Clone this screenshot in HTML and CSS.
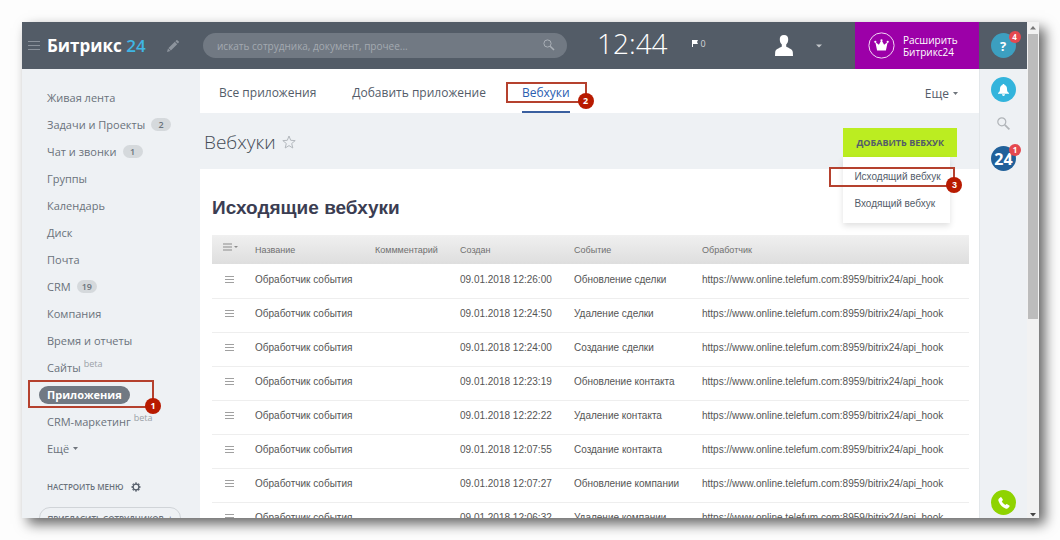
FILE: index.html
```html
<!DOCTYPE html>
<html lang="ru">
<head>
<meta charset="utf-8">
<title>Битрикс 24 – Вебхуки</title>
<link rel="stylesheet" href="styles.css">
</head>
<body>
<div class="frame">
  <div class="app">
    <header class="topbar">
      <button class="icon-btn burger" aria-label="Меню">
        <svg width="12" height="11" viewBox="0 0 12 11"><path d="M0 1.5h12M0 5.5h12M0 9.5h12" stroke="#8b929b" stroke-width="1"/></svg>
      </button>
      <a class="logo" href="#">Битрикс <span class="logo-num">24</span></a>
      <button class="icon-btn edit" aria-label="Изменить">
        <svg width="12" height="12" viewBox="0 0 12 12" fill="#8d949d"><path d="M0 12l1-3.400 2.400 2.400zM1.500 8.100l6.300-6.300 2.400 2.400-6.300 6.300zM8.400 1.200l1-1q.500-.4 1 0l1.400 1.400q.4.500 0 1l-1 1z"/></svg>
      </button>
      <form class="search">
        <input class="search-input" type="text" aria-label="Поиск" placeholder="искать сотрудника, документ, прочее...">
        <svg class="search-icon" width="12" height="12" viewBox="0 0 12 12" fill="none" stroke="#a9afb6"><circle cx="4.500" cy="4.500" r="3.600"/><path d="M7.200 7.200l3.800 3.800" stroke-width="1.600"/></svg>
      </form>
      <time class="clock">12:44</time>
      <span class="flag"><svg width="6" height="7" viewBox="0 0 6 7" fill="#fff"><path d="M0 0h1v7H0zM1 0h5L5 2l1 2H1z"/></svg>0</span>
      <button class="icon-btn user" aria-label="Профиль">
        <svg width="18" height="21" viewBox="0 0 18 21" fill="#fff"><path d="M9 0c3 0 4.400 1.800 4.200 4.600 0 2.200-.8 4-2 5v2c.8 1.200 6.200 2 6.600 5.400L18 21H0l.2-4C.6 13.600 6 12.800 6.800 11.600v-2c-1.200-1-2-2.800-2-5C4.600 1.800 6 0 9 0z"/></svg>
        <svg class="user-caret" width="6" height="4" viewBox="0 0 6 4" fill="#c3c7cb"><path d="M0 .5h6L3 3.500z"/></svg>
      </button>
      <a class="upgrade" href="#">
        <svg width="27" height="27" viewBox="0 0 27 27"><circle cx="13.500" cy="13.500" r="12.600" fill="none" stroke="#f3d7f5"/><path d="M7.300 10l3.600 2.800 2.600-4.800 2.600 4.800 3.600-2.800-1.800 8.400H9.100z" fill="#fff"/><circle cx="7.300" cy="9.800" r="1.100" fill="#fff"/><circle cx="13.500" cy="8.300" r="1.100" fill="#fff"/><circle cx="19.700" cy="9.800" r="1.100" fill="#fff"/></svg>
        <span>Расширить<br>Битрикс24</span>
      </a>
      <div class="help-cell">
        <button class="round help" aria-label="Помощь">?<span class="counter">4</span></button>
      </div>
    </header>

    <nav class="sidebar">
      <ul class="menu">
        <li><a href="#">Живая лента</a></li>
        <li><a href="#">Задачи и Проекты</a><span class="badge">2</span></li>
        <li><a href="#">Чат и звонки</a><span class="badge">1</span></li>
        <li><a href="#">Группы</a></li>
        <li><a href="#">Календарь</a></li>
        <li><a href="#">Диск</a></li>
        <li><a href="#">Почта</a></li>
        <li><a href="#">CRM</a><span class="badge">19</span></li>
        <li><a href="#">Компания</a></li>
        <li><a href="#">Время и отчеты</a></li>
        <li><a href="#">Сайты</a><span class="beta">beta</span></li>
        <li class="marked"><a class="active" href="#">Приложения</a><span class="mark mark-menu"><b class="mark-num">1</b></span></li>
        <li><a href="#">CRM-маркетинг</a><span class="beta">beta</span></li>
      </ul>
      <button class="more">Ещё <svg width="5" height="3" viewBox="0 0 5 3" fill="#6f757c"><path d="M0 0h5L2.500 3z"/></svg></button>
      <button class="configure">Настроить меню
        <svg width="10" height="10" viewBox="0 0 10 10" fill="none" stroke="#535c69"><circle cx="5" cy="5" r="2.900" stroke-width="1.300"/><path d="M5 .6v1.200M5 8.200v1.200M.6 5h1.200M8.200 5h1.200M1.800 1.800l.9.9M7.300 7.300l.9.9M8.200 1.800l-.9.9M2.700 7.300l-.9.9" stroke-width="1.800"/></svg>
      </button>
      <button class="invite">Пригласить сотрудников <span>+</span></button>
    </nav>

    <main class="main">
      <nav class="tabs">
        <a class="tab" href="#">Все приложения</a>
        <a class="tab" href="#">Добавить приложение</a>
        <a class="tab current" href="#">Вебхуки<span class="mark mark-tab"><b class="mark-num">2</b></span></a>
        <button class="tabs-more">Еще <svg width="5" height="3" viewBox="0 0 5 3" fill="#6f757c"><path d="M0 0h5L2.500 3z"/></svg></button>
      </nav>
      <div class="titlebar">
        <h1 class="title">Вебхуки</h1>
        <svg width="14" height="14" viewBox="0 0 14 14" fill="none" stroke="#b3b8bd"><path d="M7 1l1.700 4.300 4.500.3-3.500 2.900 1.100 4.500L7 10.600 3.200 13l1.100-4.500L.8 5.600l4.500-.3z"/></svg>
        <div class="add">
          <button class="add-btn">Добавить вебхук</button>
          <div class="dropdown">
            <a class="drop-item" href="#">Исходящий вебхук<span class="mark mark-drop"><b class="mark-num">3</b></span></a>
            <a class="drop-item" href="#">Входящий вебхук</a>
          </div>
        </div>
      </div>
      <section class="content">
        <h2 class="heading">Исходящие вебхуки</h2>
        <table class="grid">
          <colgroup><col class="c-menu"><col class="c-name"><col class="c-note"><col class="c-date"><col class="c-event"><col></colgroup>
          <thead>
            <tr><th><svg width="15" height="8" viewBox="0 0 15 8"><path d="M0 1h9M0 4h9M0 7h9" stroke="#8b8b8b"/><path d="M11 3h4l-2 2z" fill="#8b8b8b"/></svg></th><th>Название</th><th>Коммментарий</th><th>Создан</th><th>Событие</th><th>Обработчик</th></tr>
          </thead>
          <tbody id="rows"></tbody>
        </table>
      </section>
    </main>

    <aside class="rail">
      <button class="round bell" aria-label="Уведомления">
        <svg width="11" height="12" viewBox="0 0 11 12" fill="#fff"><path d="M5.500 0c.7 0 1 .4 1 1 1.800.5 2.500 2 2.500 3.800 0 2.400.5 3.200 2 4.200v.8H0V9c1.500-1 2-1.800 2-4.200C2 3 2.700 1.500 4.500 1c0-.6.3-1 1-1zM4 10.300h3c0 2.200-3 2.200-3 0z"/></svg>
      </button>
      <button class="icon-btn rail-search" aria-label="Поиск">
        <svg width="13" height="13" viewBox="0 0 13 13" fill="none" stroke="#b0b4b8"><circle cx="4.800" cy="4.800" r="4" stroke-width="1.200"/><path d="M7.800 7.800l4.600 4.600" stroke-width="1.700"/></svg>
      </button>
      <button class="round b24" aria-label="Битрикс24">24<span class="counter">1</span></button>
      <button class="round phone" aria-label="Позвонить">
        <svg width="12" height="12" viewBox="0 0 12 12" fill="#fff"><path d="M1 1.400L2.500.2q.6-.4 1 .2l1.300 2.200q.3.600-.2 1l-.8.700q.8 2.500 3.500 3.800l.9-.8q.5-.4 1-.1l2.100 1.300q.6.500.2 1l-1.300 1.600q-1 1-2.700.4Q2.500 9.500.5 4 0 2.400 1 1.400z"/></svg>
      </button>
    </aside>

    <div class="scrollbar">
      <svg width="6" height="4" viewBox="0 0 6 4" fill="#777"><path d="M3 0l3 3.500H0z"/></svg>
      <div class="thumb"></div>
      <svg class="scroll-down" width="6" height="4" viewBox="0 0 6 4" fill="#444"><path d="M0 0h6L3 3.500z"/></svg>
    </div>
  </div>
</div>
<script src="rows.js"></script>
</body>
</html>
```
FILE: rows.js
```js
const hooks = [
  ["12:26:00", "Обновление сделки"],
  ["12:24:50", "Удаление сделки"],
  ["12:24:00", "Создание сделки"],
  ["12:23:19", "Обновление контакта"],
  ["12:22:22", "Удаление контакта"],
  ["12:07:55", "Создание контакта"],
  ["12:07:27", "Обновление компании"],
  ["12:06:32", "Удаление компании"]
];
const icon = '<svg width="9" height="7" viewBox="0 0 9 7"><path d="M0 .5h9M0 3.500h9M0 6.500h9" stroke="#a0a0a0"/></svg>';
document.getElementById("rows").innerHTML = hooks.map(([time, event]) =>
  `<tr><td class="handle">${icon}</td><td>Обработчик события</td><td></td><td>09.01.2018 ${time}</td><td>${event}</td><td>https://www.online.telefum.com:8959/bitrix24/api_hook</td></tr>`
).join("");
```
FILE: styles.css
```css
* { box-sizing: border-box; }
body {
  margin: 0;
  background: #fdfdfd;
  font-family: "Open Sans", "Noto Sans", sans-serif;
  font-size: 12px;
  color: #535c69;
}
a { color: inherit; text-decoration: none; }
button {
  border: 0;
  padding: 0;
  background: none;
  font: inherit;
  color: inherit;
  cursor: pointer;
}
svg { display: block; flex: none; }

.frame { height: 100vh; padding: 22px 21px 22px 22px; }
.app {
  display: grid;
  grid-template-columns: 178px 1fr 48px 12px;
  grid-template-rows: 47px minmax(0, 1fr);
  height: 100%;
  overflow: hidden;
  background: #eef1f4;
  box-shadow: 6px 6px 12px rgba(0, 0, 0, .6);
}

/* Top bar */
.topbar {
  grid-column: 1 / 4;
  display: flex;
  align-items: center;
  background: #535c67;
  color: #fff;
}
.burger { margin: 0 7px 0 6px; }
.logo { width: 120px; font-size: 17px; font-weight: 700; line-height: 24px; }
.logo-num { color: #3fb6e4; font-weight: 600; }
.edit { margin-right: 24px; }
.search { position: relative; flex: 0 1 364px; }
.search-input {
  display: block;
  width: 100%;
  height: 25px;
  padding: 0 36px 0 14px;
  border: 0;
  border-radius: 13px;
  background: #717983;
  font-family: inherit;
  font-size: 10px;
  color: #fff;
}
.search-input::placeholder { color: #a4aab1; opacity: 1; }
.search-icon { position: absolute; right: 12px; top: 6px; }
.clock { margin-left: 30px; padding-bottom: 5px; font-size: 28px; font-weight: 300; line-height: 36px; }
.flag {
  display: flex;
  align-items: center;
  gap: 3px;
  margin-left: 24px;
  padding-bottom: 4px;
  font-size: 9px;
  line-height: 12px;
  color: #d3d6d9;
}
.user { display: flex; align-items: center; gap: 23px; margin-left: auto; }
.upgrade {
  display: flex;
  align-items: center;
  gap: 8px;
  width: 124px;
  height: 47px;
  margin-left: 33px;
  padding-left: 13px;
  background: #9c00a8;
  font-size: 10px;
  line-height: 12px;
}
.help-cell { display: flex; justify-content: center; width: 48px; }

.round {
  position: relative;
  display: flex;
  flex: none;
  align-items: center;
  justify-content: center;
  width: 25px;
  height: 25px;
  border-radius: 50%;
  color: #fff;
  font-weight: 700;
}
.help { background: #3c9fc0; font-size: 13px; }
.bell { background: #33b4dc; }
.b24 { background: #21619a; font-size: 16px; }
.phone { background: #8fd300; margin-top: auto; }
.counter {
  position: absolute;
  top: -2px;
  right: -5px;
  width: 12px;
  height: 12px;
  border-radius: 50%;
  background: #e5484f;
  font-size: 8px;
  line-height: 12px;
  text-align: center;
}

/* Left menu */
.sidebar { padding: 15px 17px 0; color: #6a727b; font-size: 11px; }
.menu { margin: 0; padding: 0; list-style: none; }
.menu li {
  display: flex;
  align-items: center;
  height: 27px;
  padding-left: 8px;
  white-space: nowrap;
}
.badge {
  min-width: 20px;
  margin-left: 6px;
  padding: 0 5px;
  border-radius: 7px;
  background: #d5d9dc;
  font-size: 9px;
  font-weight: 600;
  line-height: 13px;
  text-align: center;
}
.beta { align-self: flex-start; margin-left: 3px; font-size: 9px; line-height: 20px; color: #9ba1a7; }
.marked { position: relative; }
.active {
  margin-left: -8px;
  padding: 0 8px;
  border-radius: 9px;
  background: #717983;
  color: #fff;
  font-weight: 700;
  line-height: 18px;
}
.more, .configure { display: flex; align-items: center; gap: 4px; margin-left: 8px; }
.more { height: 27px; }
.configure {
  gap: 8px;
  margin-top: 18px;
  font-size: 8px;
  font-weight: 600;
  line-height: 14px;
  text-transform: uppercase;
}
.invite {
  display: block;
  width: 142px;
  height: 22px;
  margin-top: 13px;
  border: 1px solid #d0d4d8;
  border-radius: 11px;
  font-size: 8px;
  font-weight: 600;
  text-transform: uppercase;
  white-space: nowrap;
}
.invite span { margin-left: 2px; }

/* Numbered callouts */
.mark { position: absolute; border: 2px solid #b5412e; pointer-events: none; }
.mark-num {
  position: absolute;
  right: -9px;
  bottom: -8px;
  width: 16px;
  height: 16px;
  border-radius: 50%;
  background: #b81a00;
  color: #fff;
  font-size: 9px;
  font-weight: 700;
  line-height: 16px;
  text-align: center;
}
.mark-menu { left: -11px; top: -1px; width: 126px; height: 28px; }
.mark-tab { inset: 13px -17px 8px -16px; }
.mark-drop { inset: -1px -5px -1px -14px; }

/* Main column */
.main { display: flex; flex-direction: column; min-width: 0; min-height: 0; }
.tabs {
  display: flex;
  flex: none;
  gap: 36px;
  height: 44px;
  padding: 0 21px 0 19px;
  background: #fff;
}
.tab { position: relative; line-height: 48px; }
.current { color: #2a5db0; border-bottom: 2px solid #3a5f9f; }
.tabs-more { display: flex; align-items: center; gap: 4px; margin-left: auto; padding-top: 4px; }
.titlebar {
  display: flex;
  align-items: center;
  flex: none;
  gap: 6px;
  height: 56px;
  padding: 2px 22px 0 4px;
}
.title { margin: 0; font-size: 19px; font-weight: 300; line-height: 28px; color: #444b55; }
.add { position: relative; margin-left: auto; }
.add-btn {
  display: block;
  height: 29px;
  padding: 0 13px;
  background: #bbed21;
  font-size: 9px;
  font-weight: 700;
  text-transform: uppercase;
}
.dropdown {
  position: absolute;
  z-index: 1;
  top: 100%;
  left: 0;
  width: 107px;
  padding: 11px 0 10px;
  background: #fff;
  box-shadow: 0 3px 6px rgba(0, 0, 0, .12);
}
.drop-item {
  position: relative;
  display: block;
  padding-left: 11px;
  font-family: "Liberation Sans", Arial, sans-serif;
  font-size: 10px;
  line-height: 18px;
  white-space: nowrap;
}
.drop-item + .drop-item { margin-top: 9px; }
.content { flex: 1; min-height: 0; padding: 25px 10px 0 12px; background: #fff; }
.heading {
  margin: 0 0 13px;
  font-family: "Liberation Sans", Arial, sans-serif;
  font-size: 19px;
  font-weight: 700;
  line-height: 28px;
  color: #3b3d52;
}
.grid {
  width: 100%;
  table-layout: fixed;
  border-collapse: collapse;
  font-family: "Liberation Sans", Arial, sans-serif;
  font-size: 10px;
  color: #555;
  white-space: nowrap;
}
.c-menu { width: 43px; }
.c-name { width: 120px; }
.c-note { width: 85px; }
.c-date { width: 114px; }
.c-event { width: 128px; }
.grid thead { background: linear-gradient(#f0f0f0, #dedede); }
.grid th {
  height: 29px;
  padding: 0;
  font-weight: 400;
  font-size: 9px;
  text-align: left;
  color: #707070;
}
.grid th svg { margin: -6px 0 0 11px; }
.grid td { height: 34px; padding: 0 0 3px; border-bottom: 1px solid #eee; }
.handle svg { margin-left: 13px; }

/* Right rail and scrollbar */
.rail {
  display: flex;
  flex-direction: column;
  align-items: center;
  padding: 8px 0 3px;
  border-left: 1px solid #e3e7ea;
}
.rail-search { margin: 15px 0 16px; }
.scrollbar {
  grid-column: 4;
  grid-row: 1 / 3;
  display: flex;
  flex-direction: column;
  align-items: center;
  gap: 4px;
  padding: 4px 0 1px;
  background: #f2f2f2;
}
.thumb { width: 10px; height: 58%; background: #bcbcbc; }
.scroll-down { margin-top: auto; }
```
